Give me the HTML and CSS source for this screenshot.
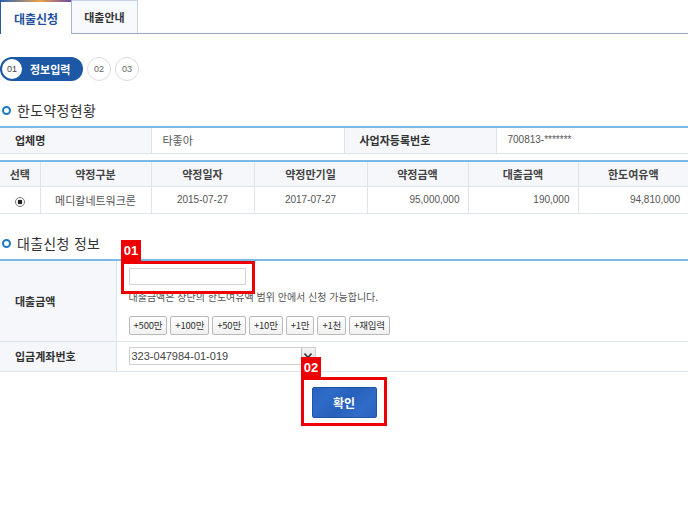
FILE: index.html
```html
<!DOCTYPE html>
<html lang="ko">
<head>
<meta charset="utf-8">
<title>대출신청</title>
<link rel="stylesheet" href="styles.css">
</head>
<body>
<div class="page">
  <div class="tabs">
    <div class="tab active">대출신청</div>
    <div class="tab">대출안내</div>
  </div>

  <div class="steps">
    <div class="step-cur"><span class="step-num">01</span><span class="step-label">정보입력</span></div>
    <span class="step">02</span>
    <span class="step">03</span>
  </div>

  <h2 class="sec-title"><span class="ring"></span>한도약정현황</h2>
  <table class="grid info">
    <colgroup><col class="c151"><col class="c193"><col class="c152"><col></colgroup>
    <tr>
      <th class="lbl">업체명</th>
      <td class="val">타좋아</td>
      <th class="lbl">사업자등록번호</th>
      <td class="val num">700813-*******</td>
    </tr>
  </table>

  <table class="grid list">
    <colgroup><col class="c40"><col class="c111"><col class="c103"><col class="c113"><col class="c101"><col class="c110"><col></colgroup>
    <tr class="head">
      <th>선택</th><th>약정구분</th><th>약정일자</th><th>약정만기일</th><th>약정금액</th><th>대출금액</th><th>한도여유액</th>
    </tr>
    <tr class="data">
      <td class="center"><span class="radio"></span></td>
      <td class="center">메디칼네트워크론</td>
      <td class="center num">2015-07-27</td>
      <td class="center num">2017-07-27</td>
      <td class="right num">95,000,000</td>
      <td class="right num">190,000</td>
      <td class="right num">94,810,000</td>
    </tr>
  </table>

  <h2 class="sec-title"><span class="ring"></span>대출신청 정보</h2>
  <table class="grid form">
    <colgroup><col class="c116"><col></colgroup>
    <tr class="row-amount">
      <th class="lbl">대출금액</th>
      <td class="amount-cell">
        <div class="text-input"></div>
        <p class="help">대출금액은 상단의 한도여유액 범위 안에서 신청 가능합니다.</p>
        <div class="quick">
          <span class="qbtn">+500만</span>
          <span class="qbtn">+100만</span>
          <span class="qbtn">+50만</span>
          <span class="qbtn">+10만</span>
          <span class="qbtn">+1만</span>
          <span class="qbtn">+1천</span>
          <span class="qbtn">+재입력</span>
        </div>
      </td>
    </tr>
    <tr class="row-account">
      <th class="lbl">입금계좌번호</th>
      <td class="account-cell">
        <div class="select">
          <span class="select-text">323-047984-01-019</span>
          <span class="select-arrow"><svg width="10" height="8" viewBox="0 0 10 8"><path d="M1.5 1.5 L5 5.5 L8.5 1.5" fill="none" stroke="#333" stroke-width="1.6"/></svg></span>
        </div>
      </td>
    </tr>
  </table>

  <div class="actions">
    <button class="confirm" type="button">확인</button>
  </div>

  <span class="mark mark1">01</span>
  <span class="box box1"></span>
  <span class="mark mark2">02</span>
  <span class="box box2"></span>
</div>
</body>
</html>
```

FILE: styles.css
```css
* { box-sizing: border-box; }
html, body { margin: 0; padding: 0; background: #fff; }
body {
  font-family: "Noto Sans CJK KR", "Liberation Sans", sans-serif;
  font-size: 11px;
  color: #555;
}
.page { position: relative; width: 688px; height: 517px; }

/* tabs */
.tabs {
  display: flex;
  height: 34px;
  border-bottom: 1px solid #9aa8c2;
}
.tab {
  height: 33px;
  width: 66px;
  display: flex;
  align-items: center;
  justify-content: center;
  font-size: 11px;
  font-weight: bold;
  color: #333;
  background: #f8f9fd;
  border-top: 1px solid #c9d3e4;
  border-right: 1px solid #c9d3e4;
}
.tab.active {
  width: 72px;
  height: 34px;
  margin-bottom: -1px;
  font-size: 12px;
  color: #1f4f9e;
  border-top: 0;
  border-left: 1px solid #2d5aa0;
  border-right: 1px solid #a9b6cc;
  background: linear-gradient(90deg, #2f63b5 0%, #e9a24a 55%, #6d4aa8 100%) top / 100% 2px no-repeat, #fff;
  padding-top: 2px;
}

/* steps */
.steps {
  display: flex;
  align-items: center;
  gap: 4px;
  margin-top: 23px;
  height: 24px;
}
.step-cur {
  display: flex;
  align-items: center;
  width: 83px;
  height: 24px;
  padding-left: 2px;
  border-radius: 12px;
  background: #1d58a6;
}
.step-num {
  width: 20px;
  height: 20px;
  border-radius: 50%;
  background: #fff;
  color: #444;
  font-family: "Liberation Sans", sans-serif;
  font-size: 9px;
  display: flex;
  align-items: center;
  justify-content: center;
}
.step-label {
  margin-left: 8px;
  color: #fff;
  font-weight: bold;
  font-size: 11px;
  line-height: 1;
}
.step {
  width: 24px;
  height: 24px;
  border-radius: 50%;
  border: 1px solid #dcdcdc;
  color: #666;
  font-family: "Liberation Sans", sans-serif;
  font-size: 9px;
  display: flex;
  align-items: center;
  justify-content: center;
}

/* section title */
.sec-title {
  display: flex;
  align-items: center;
  height: 20px;
  margin: 19px 0 6px;
  font-size: 14px;
  font-weight: normal;
  color: #333;
  letter-spacing: 0.3px;
}
.ring {
  width: 9px;
  height: 9px;
  border: 2.5px solid #1a79c9;
  border-radius: 50%;
  margin: 0 6px 0 2px;
}

/* tables */
.grid {
  width: 688px;
  border-collapse: collapse;
  table-layout: fixed;
  border-top: 2px solid #79b8e8;
}
.grid th, .grid td {
  border: 1px solid #dce4ec;
  padding: 0;
  font-size: 11px;
  line-height: 14px;
}
.grid tr > :first-child { border-left: 0; }
.grid tr > :last-child { border-right: 0; }
.grid tr:first-child > * { border-top: 0; }
.c151 { width: 151px; } .c193 { width: 193px; } .c152 { width: 152px; }
.c40 { width: 40px; } .c111 { width: 111px; } .c103 { width: 103px; }
.c113 { width: 113px; } .c101 { width: 101px; } .c110 { width: 110px; }
.c116 { width: 116px; }

.info { margin-bottom: 6px; }
.info tr { height: 26px; }
.lbl {
  background: #f5f7fa;
  color: #333;
  font-weight: bold;
  text-align: left;
  padding-left: 15px !important;
}
.val { padding-left: 11px !important; color: #555; }
.num { font-family: "Liberation Sans", sans-serif; font-size: 10px !important; }

.list .head { height: 26px; }
.list .head th { background: #f5f7fa; color: #444; font-weight: bold; text-align: center; }
.list .data { height: 27px; }
.center { text-align: center; }
.right { text-align: right; padding-right: 8px !important; }
.radio {
  display: inline-block;
  vertical-align: middle;
  width: 10px;
  height: 10px;
  border: 1px solid #777;
  border-radius: 50%;
  background: radial-gradient(circle, #222 0 2.2px, #fff 2.6px);
}

/* form */
.row-amount { height: 81px; }
.row-account { height: 30px; }
.amount-cell { vertical-align: top; padding: 7px 12px 0 12px !important; }
.text-input {
  width: 117px;
  height: 17px;
  border: 1px solid #d4d4d4;
  background: #fff;
}
.help {
  margin: 5px 0 0;
  font-size: 10px;
  line-height: 14px;
  color: #555;
}
.quick {
  display: flex;
  gap: 3px;
  margin-top: 12px;
}
.qbtn {
  height: 19px;
  padding: 0 4px;
  border: 1px solid #b9b9b9;
  border-radius: 2px;
  background: linear-gradient(#fff, #f1f1f1);
  font-size: 9.5px;
  line-height: 17px;
  color: #333;
  letter-spacing: -0.2px;
}
.account-cell { padding-left: 12px !important; }
.select {
  display: flex;
  align-items: center;
  width: 187px;
  height: 18px;
  border: 1px solid #cfcfcf;
  background: #fff;
}
.select-text {
  flex: 1;
  padding-left: 2px;
  font-family: "Liberation Sans", sans-serif;
  font-size: 11px;
  color: #444;
}
.select-arrow {
  width: 14px;
  height: 16px;
  border-left: 1px solid #bdbdbd;
  background: linear-gradient(#f4f4f4, #d9d9d9);
  display: flex;
  align-items: center;
  justify-content: center;
}

.actions {
  display: flex;
  justify-content: center;
  margin-top: 15px;
}
.confirm {
  width: 65px;
  height: 31px;
  border: 1px solid #1f53a8;
  border-radius: 2px;
  background: linear-gradient(135deg, #2a63bf 0%, #2f6bc7 25%, #2660bb 50%, #316dc8 75%, #2a63bf 100%);
  color: #fff;
  font-family: "Noto Sans CJK KR", sans-serif;
  font-size: 12px;
  font-weight: bold;
  padding: 0;
}

/* annotations */
.mark {
  position: absolute;
  width: 20px;
  height: 21px;
  background: #ee0000;
  color: #fff;
  font-family: "Liberation Sans", sans-serif;
  font-weight: bold;
  font-size: 13px;
  line-height: 21px;
  text-align: center;
}
.box {
  position: absolute;
  border: 3px solid #ee0000;
}
.mark1 { left: 121px; top: 240px; }
.box1 { left: 121px; top: 261px; width: 134px; height: 33px; }
.mark2 { left: 301px; top: 357px; }
.box2 { left: 301px; top: 377px; width: 86px; height: 49px; }
```
